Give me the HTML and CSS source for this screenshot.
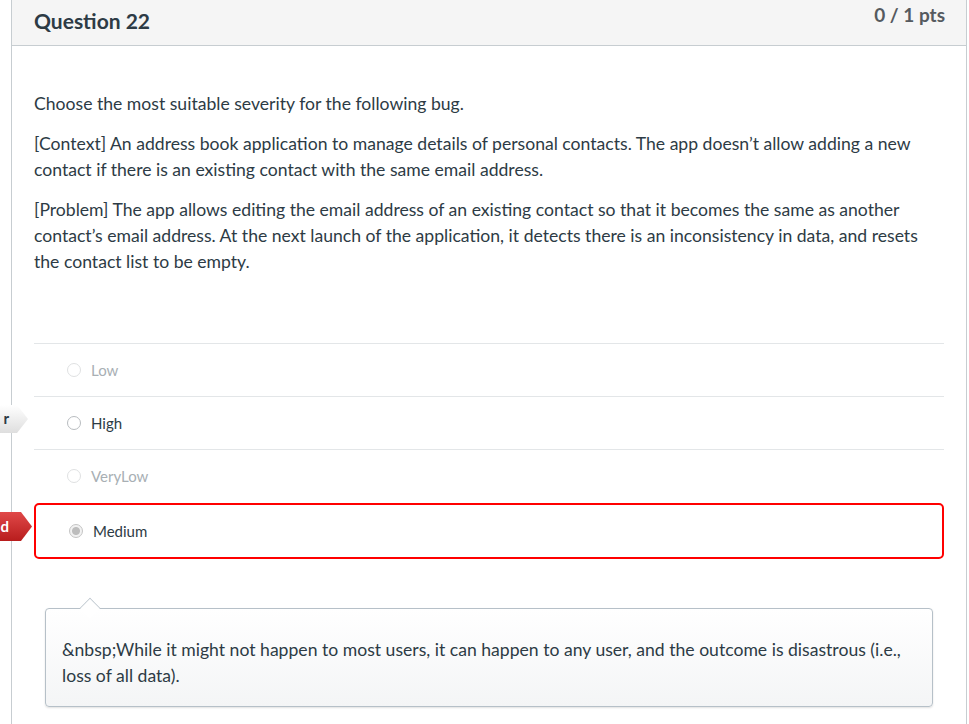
FILE: index.html
```html
<!DOCTYPE html>
<html>
<head>
<meta charset="utf-8">
<link rel="stylesheet" href="styles.css">
</head>
<body>
<div class="card">
  <div class="header">
    <span class="qtitle">Question 22</span>
    <span class="pts">0 / 1 pts</span>
  </div>
  <div class="body">
    <div class="qtext">
      <p>Choose the most suitable severity for the following bug.</p>
      <p>[Context] An address book application to manage details of personal contacts. The app doesn’t allow adding a new contact if there is an existing contact with the same email address.</p>
      <p>[Problem] The app allows editing the email address of an existing contact so that it becomes the same as another contact’s email address. At the next launch of the application, it detects there is an inconsistency in data, and resets the contact list to be empty.</p>
    </div>
    <div class="answers">
      <div class="answer dim"><span class="radio"></span><span class="label">Low</span></div>
      <div class="answer"><span class="tag tag-grey">r</span><span class="radio"></span><span class="label">High</span></div>
      <div class="answer dim"><span class="radio"></span><span class="label">VeryLow</span></div>
      <div class="answer selected"><span class="tag tag-red">d</span><span class="radio checked"></span><span class="label">Medium</span></div>
    </div>
    <div class="comment">
      <p>&amp;nbsp;While it might not happen to most users, it can happen to any user, and the outcome is disastrous (i.e., loss of all data).</p>
    </div>
  </div>
</div>
</body>
</html>
```

FILE: styles.css
```css
html, body {
  margin: 0;
  padding: 0;
  background: #fff;
}
body {
  font-family: Lato, "Open Sans", sans-serif;
  color: #2d3b45;
  font-size: 17.6px;
  overflow: hidden;
}
.card {
  margin-left: 11px;
  width: 956px;
  box-sizing: border-box;
  border-left: 1px solid #c7cdd1;
  border-right: 1px solid #c7cdd1;
  height: 724px;
}
.header {
  height: 46px;
  box-sizing: border-box;
  background: #f5f5f5;
  border-bottom: 1px solid #c7cdd1;
  display: flex;
  justify-content: space-between;
  align-items: flex-start;
  padding: 0 21px 0 22px;
}
.qtitle {
  font-weight: 700;
  font-size: 21px;
  line-height: 21px;
  margin-top: 10px;
  color: #2d3b45;
}
.pts {
  font-weight: 700;
  font-size: 19px;
  line-height: 19px;
  margin-top: 5px;
  color: #555a5f;
}
.body {
  padding: 45px 22px 0 22px;
}
.qtext p {
  margin: 0 0 14px 0;
  line-height: 26px;
}
.answers {
  margin-top: 68px;
}
.answer {
  position: relative;
  display: flex;
  align-items: center;
  height: 52px;
  border-top: 1px solid #e3e6e8;
  padding-left: 33px;
}
.answer .label {
  margin-left: 10px;
  font-size: 15px;
}
.answer.dim .label {
  color: #a8afb4;
}
.radio {
  width: 12px;
  height: 12px;
  border-radius: 50%;
  border: 1px solid #b8bcbf;
  background: #fff;
  box-sizing: content-box;
}
.answer.dim .radio {
  border-color: #dfe1e2;
}
.radio.checked {
  border-color: #c4c4c4;
  background: radial-gradient(circle, #bdbdbd 0 3.5px, #f2f2f2 4.5px);
}
.answer.selected {
  border: 2px solid #ff0000;
  border-radius: 5px;
  height: 52px;
  padding-left: 33px;
  margin-top: 1px;
}
.tag {
  position: absolute;
  right: calc(100% + 6px);
  white-space: nowrap;
  font-size: 15px;
  font-weight: 700;
  padding: 0 19px 0 40px;
  clip-path: polygon(0 0, calc(100% - 11px) 0, 100% 50%, calc(100% - 11px) 100%, 0 100%);
}
.tag-grey {
  top: 8px;
  height: 28px;
  line-height: 26px;
  color: #2d3b45;
  background: linear-gradient(#ffffff, #dedede);
}
.tag-red {
  top: 7px;
  right: calc(100% + 4px);
  height: 29px;
  line-height: 29px;
  padding-right: 23px;
  color: #fff;
  background: linear-gradient(#e04848, #b81d1d);
}
.comment {
  position: relative;
  margin: 49px 11px 0 11px;
  border: 1px solid #b6c0c8;
  border-radius: 4px;
  background: linear-gradient(#ffffff, #f4f5f6);
  box-shadow: 0 1px 2px rgba(0, 0, 0, 0.12);
  padding: 28px 16px 17px 16px;
}
.comment::before {
  content: "";
  position: absolute;
  top: -11px;
  left: 34px;
  width: 20px;
  height: 20px;
  box-sizing: border-box;
  background: #fff;
  border-top: 1px solid #b6c0c8;
  border-left: 1px solid #b6c0c8;
  transform: rotate(45deg) scale(0.72);
}
.comment p {
  margin: 0;
  line-height: 26px;
}
```
